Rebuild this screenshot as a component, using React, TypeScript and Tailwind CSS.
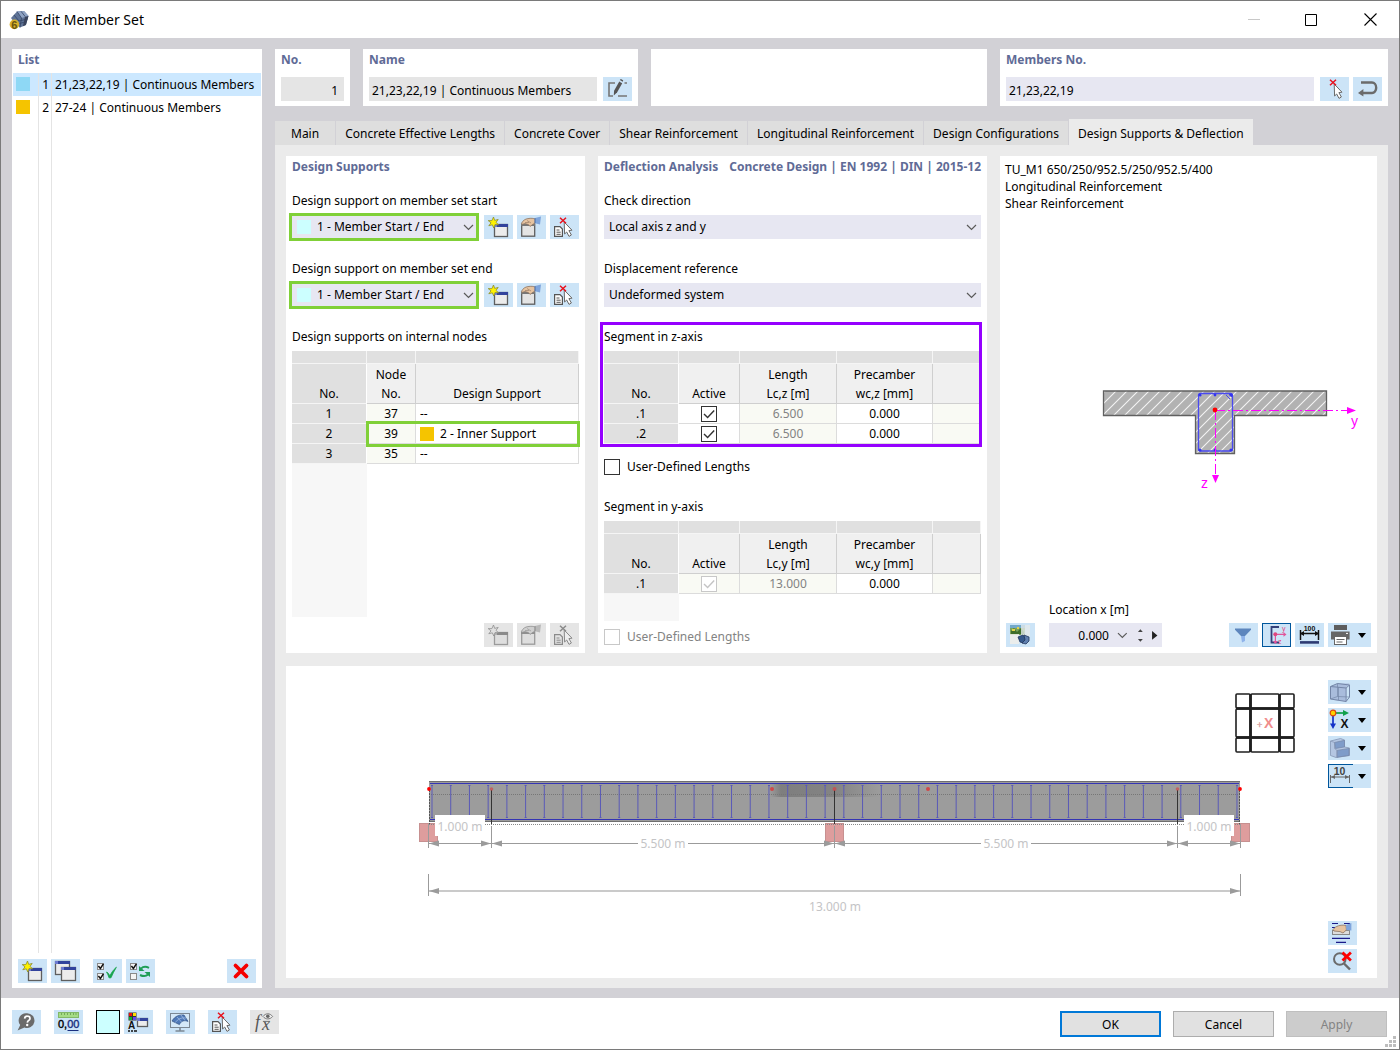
import { useId, useState, type ReactNode } from "react";
import clsx from "clsx";

const GREEN = "border-[3px] border-[#80d038]";

/* ---------- icons, all drawn on a 29x24 button face ---------- */

function Face({ children }: { children: ReactNode }) {
  return (
    <svg width="29" height="24" viewBox="0 0 29 24" fill="none" className="shrink-0" aria-hidden="true">
      {children}
    </svg>
  );
}

function MiniWindow({ x, y, w = 14, h = 13, muted }: { x: number; y: number; w?: number; h?: number; muted?: boolean }) {
  return (
    <g>
      <rect x={x + 0.5} y={y + 0.5} width={w - 1} height={h - 1} fill={muted ? "#dedede" : "#ececec"} stroke={muted ? "#9a9a9a" : "#5e5e5e"} strokeWidth="1.3" />
      <rect x={x} y={y} width={w} height="3" fill={muted ? "#8a8a8a" : "#32439c"} />
      <rect x={x} y={y} width="3" height="3" fill={muted ? "#b0b0b0" : "#6d7ad0"} />
    </g>
  );
}

function NewIcon({ muted }: { muted?: boolean }) {
  return (
    <Face>
      <MiniWindow x={10} y={9} muted={muted} />
      <path
        d="M9.5 2 L10.7 5.4 L14.2 4.4 L12 7.4 L14.6 9.8 L11 9.6 L9.8 13 L8.3 9.8 L4.8 10.8 L7 7.8 L4.2 5.6 L7.9 5.6 Z"
        fill={muted ? "#e0e0e0" : "#fff200"}
        stroke={muted ? "#8f8f8f" : "#8d8d30"}
        strokeWidth="0.8"
      />
    </Face>
  );
}

function EditIcon({ muted }: { muted?: boolean }) {
  return (
    <Face>
      <rect x="4.7" y="9.2" width="13" height="12" fill={muted ? "#dedede" : "#e4e4e4"} stroke={muted ? "#9a9a9a" : "#5e5e5e"} strokeWidth="1.3" />
      <path d="M4 9h14v2H4z" fill={muted ? "#8f8f8f" : "#777"} />
      <path
        d="M4.5 8.2 C6 5.5 8 4 11 3.6 C14 3 16.5 3.3 18.5 4.2 L18 8.4 C16.5 8.8 15.6 9.2 15 10 L13 11.4 L11.4 9.6 L8 8.6 L5 9.4 Z"
        fill={muted ? "#cfcfcf" : "#e6c3a0"}
        stroke={muted ? "#8f8f8f" : "#8c7260"}
        strokeWidth="0.8"
      />
      <path d="M8 7.5h4M10 5.5l4 2.5" stroke={muted ? "#999" : "#9b7d66"} strokeWidth="0.7" />
      <path d="M18 3 L24 1.4 L23 9.4 L18 8.2 Z" fill={muted ? "#b9b9b9" : "#7fa5dc"} />
      <path d="M18 3.2v5" stroke={muted ? "#888" : "#4a6ba0"} />
    </Face>
  );
}

function Cursor({ muted }: { muted?: boolean }) {
  return (
    <path
      d="M14.2 7 L22 15.2 L18.9 15.6 L21.4 20 L19 21.4 L16.7 17 L14.6 19 Z"
      fill={muted ? "#eee" : "#fff"}
      stroke={muted ? "#8a8a8a" : "#6a6a6a"}
      strokeWidth="1"
    />
  );
}

function PickIcon({ doc = true, muted }: { doc?: boolean; muted?: boolean }) {
  return (
    <Face>
      {doc && (
        <g>
          <path d="M4.6 11.6h5.4l2.4 2.4v7.4H4.6z" fill={muted ? "#e4e4e4" : "#fff"} stroke={muted ? "#8a8a8a" : "#555"} strokeWidth="1.2" />
          <path d="M6.5 15h3M6.5 17.2h4.2M6.5 19.3h4.2" stroke={muted ? "#8a8a8a" : "#555"} />
        </g>
      )}
      <Cursor muted={muted} />
      <path d="M10 2.8l6 5.4M16 2.8l-6 5.4" stroke={muted ? "#8a8a8a" : "#e8101c"} strokeWidth="1.5" />
    </Face>
  );
}

function CopyIcon() {
  return (
    <Face>
      <MiniWindow x={4} y={2} w={15} h={14} />
      <MiniWindow x={10} y={8} w={15} h={14} />
    </Face>
  );
}

function TickBox({ x, y, on = true }: { x: number; y: number; on?: boolean }) {
  return (
    <g>
      <rect x={x + 0.5} y={y + 0.5} width="6" height="6" fill="#f4f4f4" stroke="#8a8a8a" />
      {on && <path d={`M${x + 1.4} ${y + 3} l2 2.4 l3 -4.6`} stroke="#111" strokeWidth="1.5" />}
    </g>
  );
}

function CheckAllIcon() {
  return (
    <Face>
      <TickBox x={4} y={4} />
      <TickBox x={4} y={14} />
      <path d="M13.5 13 C15 13.5 16 15 16.8 17 C18 14.5 20 11 23.4 8.2 C21.5 11.5 19.5 15 18 18.8 L16 18.8 C15.4 16.5 14.6 14.8 13.5 13Z" fill="#16a34a" stroke="#16a34a" strokeWidth="0.8" />
    </Face>
  );
}

function SwapIcon() {
  return (
    <Face>
      <TickBox x={4} y={4} />
      <TickBox x={4} y={14} on={false} />
      <path d="M15 9.6 C17 7.6 20 7.4 23 8.8" stroke="#1f9d55" strokeWidth="2" />
      <path d="M13 7v5h5.5z" fill="#1f9d55" />
      <path d="M22 15.6 C20 17.4 17 17.4 14 16" stroke="#1f9d55" strokeWidth="2" />
      <path d="M24 18v-5h-5.5z" fill="#1f9d55" />
    </Face>
  );
}

function RedXIcon() {
  return (
    <Face>
      <path d="M8.5 6.5l11 11M19.5 6.5l-11 11" stroke="#f50000" strokeWidth="3.8" strokeLinecap="round" />
    </Face>
  );
}

function RenameIcon() {
  return (
    <Face>
      <path d="M12 6H6v13h4M15 19h9M21.5 6h2.5" stroke="#757575" strokeWidth="1.6" />
      <path d="M16.2 4.6l3 1.6-5 9-3.4 3.2.3-4.6z" fill="#555" />
      <path d="M16.8 3l1-1 2.4 1.3-.4 1.4z" fill="#555" />
    </Face>
  );
}

function ReverseIcon() {
  return (
    <Face>
      <path d="M8 5.5h11a4 5 0 0 1 0 10.5H9" stroke="#6b6b6b" strokeWidth="2.4" />
      <path d="M5 16l5.4-4v7.6z" fill="#6b6b6b" />
    </Face>
  );
}

function HelpIcon() {
  return (
    <Face>
      <path d="M15 3.2a7.4 7.4 0 1 1-2.6 14.3L5.6 20.6l2.6-5.6A7.4 7.4 0 0 1 15 3.2z" fill="#6b6b6b" />
      <path d="M12.6 8.6c.2-1.8 1.4-2.5 2.8-2.4 1.5 0 2.6.9 2.6 2.2 0 2-2.4 2-2.7 4.2" stroke="#fff" strokeWidth="1.7" />
      <circle cx="15.2" cy="15" r="1.2" fill="#fff" />
    </Face>
  );
}

function DecimalsIcon() {
  return (
    <Face>
      <rect x="4.5" y="2.5" width="20" height="5" fill="#a5dc86" stroke="#82b868" />
      <path d="M7.5 3v2M10.5 3v2M13.5 3v2M16.5 3v2M19.5 3v2M22 3v2" stroke="#5e9447" strokeWidth="0.7" />
      <text x="4" y="18" fontSize="11" fontFamily="Liberation Sans, sans-serif" fill="#000" stroke="#000" strokeWidth="0.4">
        0,<tspan fill="#1a2f80" stroke="#1a2f80">00</tspan>
      </text>
      <path d="M13.5 20.5h11" stroke="#1a2f80" />
    </Face>
  );
}

function StyleIcon() {
  return (
    <Face>
      <rect x="4.5" y="2.5" width="8" height="8" fill="#333" />
      <path d="M5 3h3v3H5z" fill="#e11" />
      <path d="M9 3h3v3H9z" fill="#fd0" />
      <path d="M5 7h3v3H5z" fill="#1a3" />
      <path d="M9 7h3v3H9z" fill="#64e" />
      <text x="4" y="19" fontSize="10" fontWeight="bold" fontFamily="Liberation Sans, sans-serif" fill="#111">A</text>
      <path d="M4 21h2M7 21h2M10 21h3" stroke="#111" strokeWidth="1.4" />
      <MiniWindow x={13} y={8} w={11} h={9} />
    </Face>
  );
}

function ViewIcon() {
  return (
    <Face>
      <rect x="4.5" y="3.5" width="19" height="14" fill="#d4e8f8" stroke="#7c8894" />
      <path d="M6 11 C9 6 13 4.6 18 5 L22 11.4 C18 9.8 15 11 13.4 14.6 Z" fill="#4f79b8" stroke="#31507f" strokeWidth="0.7" />
      <path d="M9.5 12.5C12 8.6 15 7.6 20 8M11 7l4.5 5M15 5l4 5.5" stroke="#a9c4ea" strokeWidth="0.7" />
      <path d="M14 18v3M9.5 21h9" stroke="#7c8894" strokeWidth="1.6" />
    </Face>
  );
}

function FormulaIcon() {
  return (
    <Face>
      <text x="5" y="18" fontSize="18" fontStyle="italic" fontFamily="Liberation Serif, serif" fill="#555">f</text>
      <text x="12" y="20" fontSize="18" fontStyle="italic" fontFamily="Liberation Serif, serif" fill="#555">x</text>
      <path d="M13 6.5c2.6-3.6 7-3.6 9.6 0-2.6 3.2-7 3.2-9.6 0z" stroke="#777" fill="#eee" />
      <circle cx="17.8" cy="6.2" r="1.8" fill="#666" />
      <path d="M13 11.4h7" stroke="#777" />
    </Face>
  );
}

function PictureIcon() {
  return (
    <Face>
      <path d="M4 2h15v10H4z" fill="#7ba25c" />
      <path d="M4 2h15v3H4z" fill="#74a9c9" />
      <path d="M5 8l3-3 3 4 4-4 3 4v2H5z" fill="#3f6e2a" />
      <path d="M6 6h3v2H6zM11 4h2v2h-2z" fill="#e3d44b" />
      <path d="M15 2h9v11h-9z" fill="#e3e8ea" opacity=".8" />
      <path d="M4 11h9v10H4z" fill="#efeeea" opacity=".85" />
      <path d="M12 14l5-2 3 4-3 4-3-1z" fill="#35588c" stroke="#22365c" strokeWidth="0.8" />
      <path d="M18 12l5 2v4l-3 3-4-1 3-3z" fill="#5f7fae" stroke="#22365c" strokeWidth="0.8" />
    </Face>
  );
}

function FilterIcon() {
  return (
    <Face>
      <path d="M6 5.5h16v1.2l-6 6.3h-4L6 6.7z" fill="#5d86bd" />
      <path d="M12 13h4v5l-3 1.5z" fill="#8fb3ea" />
    </Face>
  );
}

function SectionAxesIcon() {
  return (
    <Face>
      <path d="M17 4H9.5v15.5H17" stroke="#33407a" strokeWidth="1.8" />
      <path d="M13 11.4h9M13.4 11v9" stroke="#e0559a" strokeWidth="1.2" />
      <path d="M21.5 9l3 2.4-3 2.4zM11 18l2.4 3 2.4-3z" fill="#e0559a" />
      <circle cx="13.3" cy="11.3" r="2" fill="#e0457f" />
      <text x="20" y="8" fontSize="7" fontFamily="Liberation Sans, sans-serif" fill="#e0457f">y</text>
      <text x="16" y="21" fontSize="7" fontFamily="Liberation Sans, sans-serif" fill="#e0457f">z</text>
    </Face>
  );
}

function DimensionIcon() {
  return (
    <Face>
      <text x="14.5" y="8" textAnchor="middle" fontSize="7" fontWeight="bold" fontFamily="Liberation Sans, sans-serif" fill="#111">100</text>
      <path d="M5.5 7v10M23.5 7v10M5 10.5h19" stroke="#111" strokeWidth="1.5" />
      <path d="M5 10.5l4-2.5v5zM24 10.5l-4-2.5v5z" fill="#111" />
      <path d="M5 19.4h19" stroke="#2d3a72" strokeWidth="2.6" />
    </Face>
  );
}

function PrinterIcon() {
  return (
    <Face>
      <path d="M6 2h13v5H6z" fill="#5d5d5d" />
      <path d="M3 8.5h18.6v8H3z" fill="#666" />
      <rect x="6.5" y="13.5" width="12" height="8" fill="#fff" stroke="#666" />
      <path d="M8.5 16.5h8M8.5 19h6" stroke="#666" />
      <path d="M18 10.4h2" stroke="#fff" />
    </Face>
  );
}

function CubeIcon() {
  return (
    <Face>
      <path d="M2.5 6.5l7-3h12l-3.4 4v14l-12-1.5-3.6-1z" fill="#a9bcdc" />
      <path d="M2.5 6.5l7-3 12 1.5-3.4 3zM2.5 6.5v12.5l15.6 2.5V8M18.1 21.5l3.4-4.5V5" stroke="#7486a8" />
      <path d="M9.5 3.5v13l-7 2.5M9.5 16.5l12 .5M10.5 7v13" stroke="#7486a8" strokeWidth="0.7" />
    </Face>
  );
}

function AxisIcon() {
  return (
    <Face>
      <path d="M5 5v11" stroke="#1432c8" strokeWidth="1.7" />
      <path d="M2 15.5h6l-3 5.5z" fill="#1432c8" />
      <path d="M6 5h10" stroke="#12a04a" strokeWidth="1.7" />
      <path d="M15 2l6 3-6 3z" fill="#12a04a" />
      <circle cx="5" cy="5" r="2.8" fill="#ffd400" stroke="#e04a10" strokeWidth="1.2" />
      <text x="12.5" y="20" fontSize="12" fontWeight="bold" fontFamily="Liberation Sans, sans-serif" fill="#111">X</text>
    </Face>
  );
}

function StepsIcon() {
  return (
    <Face>
      <path d="M2.5 5l10-2.5 4 1.5v7l5 1v7.5L8 21.5l-5.5-2z" fill="#b4c6e2" stroke="#8797b5" strokeWidth="0.8" />
      <path d="M6.5 6.5l10-2.2v6.6l-9 1.6zM9 14.4l12-2v7l-12 1.8z" fill="#7f9cc9" stroke="#7587a8" strokeWidth="0.7" />
      <path d="M2.5 5l4 1.5v6L9 14.4v7" stroke="#8797b5" strokeWidth="0.7" />
    </Face>
  );
}

function TenIcon() {
  return (
    <Face>
      <text x="10.5" y="9.5" textAnchor="middle" fontSize="10.5" fontWeight="bold" fontFamily="Liberation Sans, sans-serif" fill="#444">10</text>
      <path d="M1.5 10v8M20.5 10v8M2 12h18" stroke="#666" />
      <path d="M2 12l4-2v4zM20 12l-4-2v4z" fill="#666" />
    </Face>
  );
}

function LayersHandIcon() {
  return (
    <Face>
      <path d="M4 2.5h6M16 2.5h6M4 6.5h3" stroke="#1b1b8a" strokeWidth="1.2" />
      <rect x="4.5" y="9.5" width="17" height="4" fill="#ddd" stroke="#888" />
      <path d="M5 8.4C8 5 12 3.6 18 4.4l.4 4.6-3.4 3-3-1.4-6-.6z" fill="#e6c3a0" stroke="#8c7260" strokeWidth="0.8" />
      <path d="M18 4l5.4-2v7.6L18.4 9z" fill="#7fa5dc" />
      <path d="M4 17.4h18M8 21.4h10" stroke="#1b1b8a" strokeWidth="1.3" />
    </Face>
  );
}

function ZoomResetIcon() {
  return (
    <Face>
      <circle cx="11.8" cy="10" r="5.8" stroke="#6b6b6b" strokeWidth="2" />
      <path d="M16 14.5l6 6" stroke="#6b6b6b" strokeWidth="2.4" />
      <path d="M14.5 3.5l8.4 8M22.9 3.5l-8.4 8" stroke="#f00" strokeWidth="2.8" />
    </Face>
  );
}

function AppIcon() {
  return (
    <svg width="20" height="20" viewBox="0 0 20 20" aria-hidden="true">
      <path d="M2 8L8 1.5l7-.5 4.5 5-2.6 9-6 2.4L5 12z" fill="#5f7396" />
      <path d="M8 1.5l7-.5 4.5 5-7 2z" fill="#8fa3c4" />
      <path d="M8 1.5L12.5 8 11 17.4M12 1.3l4.4 5.5M5 5l5 6 8.6-2M10.5 13.5l7-2" stroke="#334566" strokeWidth="0.8" fill="none" />
      <path d="M19.5 6l-2.6 9-3 1.2L16 7z" fill="#39435c" />
      <circle cx="5.4" cy="14.4" r="4.8" fill="#d8b02a" />
      <text x="5.4" y="18.6" textAnchor="middle" fontSize="11" fontWeight="bold" fontFamily="Liberation Sans, sans-serif" fill="#6a5410">6</text>
    </svg>
  );
}

function Chevron({ className }: { className?: string }) {
  return (
    <svg width="11" height="7" viewBox="0 0 11 7" fill="none" className={className} aria-hidden="true">
      <path d="M1 1l4.5 4.5L10 1" stroke="#5a5a5a" strokeWidth="1.2" />
    </svg>
  );
}

/* ---------- controls ---------- */

type IconButtonProps = {
  label: string;
  children: ReactNode;
  disabled?: boolean;
  menu?: boolean;
  active?: boolean;
};

function IconButton({ label, children, disabled, menu, active }: IconButtonProps) {
  return (
    <button
      type="button"
      aria-label={label}
      title={label}
      disabled={disabled}
      className={clsx(
        "flex h-6 shrink-0 items-center overflow-hidden",
        menu ? "w-[43px]" : "w-[29px]",
        disabled ? "bg-[#e5e5e5]" : "bg-[#cce4f7] hover:bg-[#b9daf3]",
        active && "outline outline-1 -outline-offset-1 outline-[#00569c]",
      )}
    >
      {children}
      {menu && (
        <svg width="9" height="5" viewBox="0 0 9 5" className="shrink-0" aria-hidden="true">
          <path d="M1 0h8L5 5z" fill="#000" />
        </svg>
      )}
    </button>
  );
}

function Heading({ children }: { children: ReactNode }) {
  return <h2 className="flex h-[22px] items-center justify-between font-bold whitespace-nowrap text-[#5f6b96]">{children}</h2>;
}

function SelectField({ label, value }: { label: string; value: string }) {
  const id = useId();
  return (
    <div className="mb-[18px]">
      <label htmlFor={id} className="mb-0.5 block leading-6">{label}</label>
      <div className="grid">
        <select id={id} className="col-start-1 row-start-1 h-6 w-full appearance-none bg-[#e7e7f2] px-[5px]">
          <option>{value}</option>
        </select>
        <Chevron className="pointer-events-none col-start-1 row-start-1 mr-1 self-center justify-self-end" />
      </div>
    </div>
  );
}

function SupportField({ label }: { label: string }) {
  const id = useId();
  return (
    <div className="mb-[18px]">
      <label htmlFor={id} className="mb-0.5 block leading-6">{label}</label>
      <div className="flex gap-1">
        <div className="relative mr-1 grid flex-1">
          <select id={id} className="col-start-1 row-start-1 h-6 w-full appearance-none bg-[#e7e7f2] pl-[25px]">
            <option>1 - Member Start / End</option>
          </select>
          <span className="pointer-events-none col-start-1 row-start-1 ml-[5px] size-3.5 self-center bg-[#ccffff]" />
          <Chevron className="pointer-events-none col-start-1 row-start-1 mr-0.5 self-center justify-self-end" />
          <span className={clsx("pointer-events-none absolute -inset-x-[3px] -inset-y-0.5", GREEN)} />
        </div>
        <IconButton label="New support"><NewIcon /></IconButton>
        <IconButton label="Edit support"><EditIcon /></IconButton>
        <IconButton label="Pick support"><PickIcon /></IconButton>
      </div>
    </div>
  );
}

function TickInput({ id, label, disabled, checked }: { id?: string; label?: string; disabled?: boolean; checked?: boolean }) {
  return (
    <span className="inline-grid align-top">
      <input
        id={id}
        type="checkbox"
        aria-label={label}
        defaultChecked={checked}
        disabled={disabled}
        className="peer col-start-1 row-start-1 size-4 appearance-none border border-[#333] bg-white disabled:border-[#c8c8c8]"
      />
      <svg viewBox="0 0 16 16" fill="none" className="pointer-events-none invisible col-start-1 row-start-1 size-4 text-[#333] peer-checked:visible peer-disabled:text-[#c4c4c4]" aria-hidden="true">
        <path d="M3 8l3.6 3.5L13.2 4.6" stroke="currentColor" strokeWidth="1.4" />
      </svg>
    </span>
  );
}

function CheckBox({ label, disabled }: { label: string; disabled?: boolean }) {
  const id = useId();
  return (
    <div className="flex h-6 items-center gap-[7px]">
      <TickInput id={id} disabled={disabled} />
      <label htmlFor={id} className={clsx(disabled && "text-[#838383]")}>{label}</label>
    </div>
  );
}

/* ---------- tables ---------- */

const headCell = "h-10 border-r border-b border-[#cfcfcf] bg-[#f0f0f0] p-0 align-bottom font-normal";
const numberCell = "h-5 border-r border-b border-r-white border-b-[#f5f5f5] bg-[#e0e0e0] p-0 text-center align-bottom font-normal";
const cell = "h-5 border-r border-b border-[#dcdcdc] p-0 text-center";
const stripCell = "h-[13px] border-r border-b border-[#f5f5f5] bg-[#e0e0e0] p-0";
const tableClass = "w-full table-fixed border-separate border-spacing-0 leading-[19px]";

const nodes = [
  { no: 1, node: 37, support: "--" },
  { no: 2, node: 39, support: "2 - Inner Support" },
  { no: 3, node: 35, support: "--" },
];

function NodeTable() {
  return (
    <div className="relative">
      <table className={tableClass}>
        <colgroup>
          <col className="w-[75px]" />
          <col className="w-[49px]" />
          <col />
        </colgroup>
        <thead>
          <tr>
            <td className={stripCell} />
            <td className={stripCell} />
            <td className={stripCell} />
          </tr>
          <tr>
            <th className={numberCell}>No.</th>
            <th className={headCell}>Node<br />No.</th>
            <th className={headCell}>Design Support</th>
          </tr>
        </thead>
        <tbody>
          {nodes.map((n) => (
            <tr key={n.no}>
              <th className={numberCell}>{n.no}</th>
              <td className={clsx(cell, "bg-[#f9faf4]")}>{n.node}</td>
              <td className={clsx(cell, "bg-white")}>
                <span className="flex items-center gap-1.5 px-1">
                  {n.no === 2 && <span className="size-3.5 bg-[#f5c400]" />}
                  {n.support}
                </span>
              </td>
            </tr>
          ))}
        </tbody>
      </table>
      <span className={clsx("pointer-events-none absolute -right-px bottom-[17px] left-[74px] h-[26px]", GREEN)} />
    </div>
  );
}

type Segment = { no: string; length: string; precamber: string };

function SegmentTable({ axis, rows, locked }: { axis: string; rows: Segment[]; locked?: boolean }) {
  return (
    <table className={tableClass}>
      <colgroup>
        <col className="w-[75px]" />
        <col className="w-[61px]" />
        <col className="w-[97px]" />
        <col className="w-24" />
        <col />
      </colgroup>
      <thead>
        <tr>
          <td className={stripCell} />
          <td className={stripCell} />
          <td className={stripCell} />
          <td className={stripCell} />
          <td className={stripCell} />
        </tr>
        <tr>
          <th className={numberCell}>No.</th>
          <th className={headCell}>Active</th>
          <th className={headCell}>Length<br />Lc,{axis} [m]</th>
          <th className={headCell}>Precamber<br />wc,{axis} [mm]</th>
          <td className={headCell} />
        </tr>
      </thead>
      <tbody>
        {rows.map((r) => (
          <tr key={r.no}>
            <th className={numberCell}>{r.no}</th>
            <td className={clsx(cell, "leading-none", locked ? "bg-[#f9faf4]" : "bg-white")}>
              <TickInput label={`Segment ${r.no} in ${axis}-axis active`} checked disabled={locked} />
            </td>
            <td className={clsx(cell, "bg-[#f9faf4] text-[#838383]")}>{r.length}</td>
            <td className={clsx(cell, "bg-white")}>{r.precamber}</td>
            <td className={clsx(cell, "bg-[#f9faf4]")} />
          </tr>
        ))}
      </tbody>
    </table>
  );
}

/* ---------- drawings ---------- */

function CrossSection() {
  return (
    <svg viewBox="1000 212 377 386" className="h-[386px] w-full" aria-label="Cross-section">
      <defs>
        <pattern id="hatch" width="11" height="11" patternUnits="userSpaceOnUse">
          <rect width="11" height="11" fill="#b2b2b2" />
          <path d="M-1 12L12 -1M-1 1L1 -1M10 12L12 10" stroke="#f4f4f4" strokeWidth="1.1" />
        </pattern>
      </defs>
      <path d="M1103.5 391h223v24.5h-92v38h-39v-38h-92z" fill="url(#hatch)" stroke="#606060" strokeWidth="1.3" />
      <rect x="1198.5" y="393.5" width="34" height="57.5" rx="2" fill="none" stroke="#4a4af0" strokeWidth="1.3" />
      <path d="M1226 395l4 4M1229 394l4 4" stroke="#4a4af0" />
      <g fill="#3434ee">
        <circle cx="1200" cy="395" r="1.6" />
        <circle cx="1215" cy="395" r="1.4" />
        <circle cx="1231" cy="395" r="1.6" />
        <circle cx="1200" cy="450" r="1.6" />
        <circle cx="1215" cy="450" r="1.4" />
        <circle cx="1231" cy="450" r="1.6" />
      </g>
      <path d="M1215 410.5H1350M1215.5 410V476" stroke="#f0f" strokeDasharray="10 3 2 3" fill="none" />
      <path d="M1347 407l9 3.5-9 3.5zM1212 475h7l-3.5 8z" fill="#f0f" />
      <circle cx="1215" cy="410" r="2.4" fill="#f00" />
      <text x="1351" y="426" fontSize="14" fontFamily="Liberation Sans, sans-serif" fill="#f0f">y</text>
      <text x="1201" y="488" fontSize="14" fontFamily="Liberation Sans, sans-serif" fill="#f0f">z</text>
    </svg>
  );
}

const stirrups = Array.from({ length: 44 }, (_, i) => 432 + i * 18.72);
const cubeCols = [[1236, 14], [1251, 28], [1280, 14]];
const cubeRows = [[694, 14], [709, 28], [738, 14]];

function Arrow({ x, y, dir }: { x: number; y: number; dir: 1 | -1 }) {
  return <path d={`M${x} ${y}l${-10 * dir} -3v6z`} fill="#9b9b9b" />;
}

function BeamView() {
  return (
    <svg viewBox="286 666 1036 312" className="h-[312px] min-w-0 flex-1" fontFamily="Noto Sans, sans-serif" fontSize="12" aria-label="Member view">
      <defs>
        <linearGradient id="shade" x1="0" x2="1" y1="0" y2="0">
          <stop offset="0" stopColor="#666" stopOpacity="0" />
          <stop offset="0.1" stopColor="#666" stopOpacity=".55" />
          <stop offset="0.6" stopColor="#666" stopOpacity=".45" />
          <stop offset="1" stopColor="#666" stopOpacity="0" />
        </linearGradient>
      </defs>

      {/* Supports */}
      <g fill="#de9d9d" stroke="#c79090">
        <rect x="419.5" y="823.5" width="18" height="18" />
        <rect x="825.5" y="823.5" width="18" height="18" />
        <rect x="1231.5" y="823.5" width="18" height="18" />
      </g>

      {/* Beam */}
      <rect x="429" y="781" width="811" height="41" fill="#9c9c9c" />
      <rect x="770" y="783" width="110" height="14" fill="url(#shade)" />
      <path d="M429 781.5H1240M429 821.5H1240" stroke="#6f6f6f" />
      <path d="M430 783.5H1239M430 819.5H1239" stroke="#3434b4" />
      <path d="M429 794.5H1240" stroke="#777" strokeDasharray="1 1" />
      {stirrups.map((x) => (
        <path key={x} d={`M${x} 785V818M${x - 1} 785.5h2M${x - 1} 817.5h2`} stroke="#5a5ab8" />
      ))}
      <path d="M429 824.5H1240" stroke="#888" strokeDasharray="1 1" />
      <path d="M491.5 790V824M834.5 790V824M1177.5 790V824" stroke="#333" />
      <path d="M429.5 790V824M1239.5 790V824" stroke="#555" strokeDasharray="2 1" />
      <g fill="#d04848">
        <circle cx="491.5" cy="789" r="1.8" opacity=".7" />
        <circle cx="772" cy="789" r="2" />
        <circle cx="834.5" cy="789" r="2" opacity=".8" />
        <circle cx="928" cy="789" r="2" />
        <circle cx="1177.5" cy="789" r="1.8" opacity=".7" />
      </g>
      <circle cx="429" cy="789" r="1.9" fill="#f00" />
      <circle cx="1240" cy="789" r="1.9" fill="#f00" />

      {/* Dimensions */}
      <path d="M429 843.5H638M688 843.5H981M1031 843.5H1240" stroke="#9b9b9b" />
      <path d="M428.5 824V848M491.5 826V848M834.5 826V848M1177.5 826V848M1240.5 824V848" stroke="#9b9b9b" />
      <Arrow x={429} y={843.5} dir={-1} />
      <Arrow x={491} y={843.5} dir={1} />
      <Arrow x={492} y={843.5} dir={-1} />
      <Arrow x={834} y={843.5} dir={1} />
      <Arrow x={835} y={843.5} dir={-1} />
      <Arrow x={1177} y={843.5} dir={1} />
      <Arrow x={1178} y={843.5} dir={-1} />
      <Arrow x={1240} y={843.5} dir={1} />
      <path d="M429 891H1240" stroke="#cacaca" strokeWidth="2" />
      <path d="M428.5 874V896M1240.5 874V896" stroke="#9b9b9b" />
      <Arrow x={429} y={891} dir={-1} />
      <Arrow x={1240} y={891} dir={1} />
      <path d="M435 815h50v21h-50zM1184 815h50v21h-50z" fill="#fff" />
      <g fill="#c4c4c6" textAnchor="middle">
        <text x="460" y="831">1.000 m</text>
        <text x="1209" y="831">1.000 m</text>
        <text x="663" y="848">5.500 m</text>
        <text x="1006" y="848">5.500 m</text>
        <text x="835" y="911">13.000 m</text>
      </g>

      {/* Navigation cube */}
      {cubeRows.map(([y, h]) =>
        cubeCols.map(([x, w]) => (
          <rect key={`${x}-${y}`} x={x} y={y} width={w} height={h} rx="1" fill="#fff" stroke="#1f1f1f" strokeWidth="1.6" />
        )),
      )}
      <path d="M1250.5 694v58M1279.5 694v58M1236 708.5h58M1236 737.5h58" stroke="#1f1f1f" strokeWidth="2.4" />
      <text x="1257" y="728" fontSize="9" fontFamily="Liberation Sans, sans-serif" fill="#d8a0a0" stroke="#d8a0a0" strokeWidth="0.4">+</text>
      <text x="1264" y="728" fontSize="14" fontWeight="bold" fontFamily="Liberation Sans, sans-serif" fill="#f08c8c">X</text>
    </svg>
  );
}

/* ---------- window parts ---------- */

const memberSets = [
  { no: 1, label: "21,23,22,19 | Continuous Members", swatch: "bg-[#8ed8f5]" },
  { no: 2, label: "27-24 | Continuous Members", swatch: "bg-[#f5c400]" },
];

function MemberList() {
  const [selected, setSelected] = useState(1);
  return (
    <aside className="flex w-[250px] shrink-0 flex-col bg-white px-px pb-[5px]">
      <h2 className="h-6 px-[5px] leading-[22px] font-bold text-[#5f6b96]">List</h2>
      {memberSets.map((m) => (
        <button
          key={m.no}
          type="button"
          onClick={() => setSelected(m.no)}
          className={clsx("flex h-[23px] items-stretch text-left leading-6 whitespace-nowrap", selected === m.no && "bg-[#cce8ff]")}
        >
          <span className="w-[26px] shrink-0 border-r border-[#e4e4e4] px-[3px] py-1">
            <span className={clsx("block size-3.5", m.swatch)} />
          </span>
          <span className="w-[13px] shrink-0 border-r border-[#e4e4e4] pr-0.5 text-right">{m.no}</span>
          <span className="pl-[3px]">{m.label}</span>
        </button>
      ))}
      <div className="flex flex-1">
        <span className="w-[26px] border-r border-[#e4e4e4]" />
        <span className="w-[13px] border-r border-[#e4e4e4]" />
      </div>
      <div className="mt-1.5 flex gap-1 px-[5px]">
        <IconButton label="New set"><NewIcon /></IconButton>
        <IconButton label="Copy set"><CopyIcon /></IconButton>
        <div className="ml-[9px] flex flex-1 gap-1">
          <IconButton label="Select all"><CheckAllIcon /></IconButton>
          <IconButton label="Invert selection"><SwapIcon /></IconButton>
        </div>
        <IconButton label="Delete"><RedXIcon /></IconButton>
      </div>
    </aside>
  );
}

const cardLabel = "mb-1.5 block leading-[22px] font-bold text-[#5f6b96]";

function TopCards() {
  return (
    <div className="flex gap-[13px]">
      <div className="w-[75px] bg-white px-1.5 pb-[5px]">
        <label htmlFor="set-no" className={cardLabel}>No.</label>
        <input id="set-no" readOnly value="1" className="block h-6 w-full bg-[#e5e5e5] px-1.5 pt-0.5 text-right" />
      </div>
      <div className="w-[275px] bg-white px-1.5 pb-[5px]">
        <label htmlFor="set-name" className={cardLabel}>Name</label>
        <div className="flex gap-1.5">
          <input id="set-name" readOnly value="21,23,22,19 | Continuous Members" className="block h-6 min-w-0 flex-1 bg-[#e5e5e5] px-[3px] pt-0.5" />
          <IconButton label="Rename"><RenameIcon /></IconButton>
        </div>
      </div>
      <div className="flex-1 bg-white" />
      <div className="w-[388px] bg-white px-1.5 pb-[5px]">
        <label htmlFor="members" className={cardLabel}>Members No.</label>
        <div className="flex gap-1">
          <input id="members" defaultValue="21,23,22,19" className="mr-0.5 block h-6 min-w-0 flex-1 bg-[#e7e7f2] px-[3px] pt-0.5" />
          <IconButton label="Pick members"><PickIcon doc={false} /></IconButton>
          <IconButton label="Reverse order"><ReverseIcon /></IconButton>
        </div>
      </div>
    </div>
  );
}

const tabs = [
  "Main",
  "Concrete Effective Lengths",
  "Concrete Cover",
  "Shear Reinforcement",
  "Longitudinal Reinforcement",
  "Design Configurations",
  "Design Supports & Deflection",
];

function Tabs() {
  const [active, setActive] = useState(6);
  return (
    <div role="tablist" className="mt-[13px] flex items-end">
      {tabs.map((t, i) => (
        <button
          key={t}
          type="button"
          role="tab"
          aria-selected={i === active}
          onClick={() => setActive(i)}
          className={clsx(
            "whitespace-nowrap",
            i === 0 ? "px-4" : "px-[9px]",
            i === active ? "h-[26px] bg-[#ebebeb] pt-1" : "h-6 border-r border-[#d2d1d6] bg-[#dedede] pt-0.5",
          )}
        >
          {t}
        </button>
      ))}
    </div>
  );
}

function DesignSupports() {
  return (
    <section className="flex w-[299px] shrink-0 flex-col bg-white px-1.5 pb-1.5">
      <Heading>Design Supports</Heading>
      <div className="mt-[11px]">
        <SupportField label="Design support on member set start" />
        <SupportField label="Design support on member set end" />
      </div>
      <p className="mb-0.5 leading-6">Design supports on internal nodes</p>
      <NodeTable />
      <div className="mb-1.5 w-[75px] flex-1 bg-[#f7f7f7]" />
      <div className="flex justify-end gap-1">
        <IconButton label="New support" disabled><NewIcon muted /></IconButton>
        <IconButton label="Edit support" disabled><EditIcon muted /></IconButton>
        <IconButton label="Pick support" disabled><PickIcon muted /></IconButton>
      </div>
    </section>
  );
}

function DeflectionAnalysis() {
  return (
    <section className="w-[389px] shrink-0 bg-white px-1.5 pb-1">
      <Heading>
        <span>Deflection Analysis</span>
        <span>Concrete Design | EN 1992 | DIN | 2015-12</span>
      </Heading>
      <div className="mt-[11px]">
        <SelectField label="Check direction" value="Local axis z and y" />
        <SelectField label="Displacement reference" value="Undeformed system" />
      </div>
      <div className="relative">
        <p className="mb-0.5 leading-6">Segment in z-axis</p>
        <SegmentTable
          axis="z"
          rows={[
            { no: ".1", length: "6.500", precamber: "0.000" },
            { no: ".2", length: "6.500", precamber: "0.000" },
          ]}
        />
        <span className="pointer-events-none absolute -top-[3px] -right-px -bottom-[3px] -left-1 border-[3px] border-[#9500ff]" />
      </div>
      <div className="mt-[11px] mb-4">
        <CheckBox label="User-Defined Lengths" />
      </div>
      <p className="mb-0.5 leading-6">Segment in y-axis</p>
      <SegmentTable axis="y" locked rows={[{ no: ".1", length: "13.000", precamber: "0.000" }]} />
      <div className="mb-1 h-[27px] w-[75px] bg-[#f7f7f7]" />
      <CheckBox label="User-Defined Lengths" disabled />
    </section>
  );
}

function SectionPanel() {
  return (
    <section className="flex min-w-0 flex-1 flex-col bg-white px-1.5 pt-[5px] pb-1.5">
      <div className="-ml-px leading-[17px]">
        <p>TU_M1 650/250/952.5/250/952.5/400</p>
        <p>Longitudinal Reinforcement</p>
        <p>Shear Reinforcement</p>
      </div>
      <div className="-mx-1.5">
        <CrossSection />
      </div>
      <div className="mt-auto flex items-end gap-1">
        <IconButton label="Section picture"><PictureIcon /></IconButton>
        <div className="ml-2.5 w-[113px]">
          <label htmlFor="location" className="mb-px block leading-6 whitespace-nowrap">Location x [m]</label>
          <div className="flex h-6 items-center bg-[#e7e7f2]">
            <input id="location" defaultValue="0.000" className="w-[60px] bg-transparent pt-0.5 text-right" />
            <Chevron className="ml-2" />
            <svg width="27" height="16" viewBox="0 0 27 16" className="ml-2" aria-hidden="true">
              <path d="M2 5l2.5-3L7 5zM2 12l2.5 3L7 12z" fill="#444" />
              <path d="M16.5 4l5.500 4.500-5.500 4.500z" fill="#222" />
            </svg>
          </div>
        </div>
        <div className="ml-auto flex gap-1">
          <IconButton label="Filter"><FilterIcon /></IconButton>
          <IconButton label="Show axes" active><SectionAxesIcon /></IconButton>
          <IconButton label="Show dimensions"><DimensionIcon /></IconButton>
          <IconButton label="Print" menu><PrinterIcon /></IconButton>
        </div>
      </div>
    </section>
  );
}

function MemberView() {
  return (
    <section className="mt-[13px] flex flex-1 bg-white pr-1.5">
      <BeamView />
      <div className="ml-1.5 flex w-[43px] flex-col gap-1 pt-3.5 pb-[5px]">
        <IconButton label="View mode" menu><CubeIcon /></IconButton>
        <IconButton label="View direction" menu><AxisIcon /></IconButton>
        <IconButton label="Display style" menu><StepsIcon /></IconButton>
        <IconButton label="Dimensions" menu>
          <span className="mr-1 flex h-6 w-[25px] shrink-0 border border-r-0 border-[#00569c]"><TenIcon /></span>
        </IconButton>
        <div className="mt-auto flex flex-col gap-1">
          <IconButton label="Edit layers"><LayersHandIcon /></IconButton>
          <IconButton label="Reset zoom"><ZoomResetIcon /></IconButton>
        </div>
      </div>
    </section>
  );
}

function Footer() {
  return (
    <footer className="relative flex h-[51px] items-start gap-[13px] px-[11px] pt-3">
      <IconButton label="Help"><HelpIcon /></IconButton>
      <IconButton label="Decimal places"><DecimalsIcon /></IconButton>
      <div className="flex gap-1">
        <button type="button" aria-label="Colour" className="size-6 border border-black bg-[#ccffff]" />
        <IconButton label="Display properties"><StyleIcon /></IconButton>
      </div>
      <IconButton label="Show in model"><ViewIcon /></IconButton>
      <IconButton label="Pick object"><PickIcon /></IconButton>
      <IconButton label="Formula" disabled><FormulaIcon /></IconButton>
      <div className="mr-px ml-auto flex gap-3 pt-px">
        <button type="button" className="h-[26px] w-[101px] border-2 border-[#0078d7] bg-[#e1e1e1] pt-0.5">OK</button>
        <button type="button" className="h-[26px] w-[101px] border border-[#adadad] bg-[#e1e1e1] pt-0.5">Cancel</button>
        <button type="button" disabled className="h-[26px] w-[101px] border border-[#bfbfbf] bg-[#cccccc] pt-0.5 text-[#838383]">Apply</button>
      </div>
      <svg width="11" height="11" viewBox="0 0 11 11" fill="#bdbdbd" className="absolute right-[3px] bottom-0.5" aria-hidden="true">
        <path d="M8 0h3v3H8zM4 4h3v3H4zM8 4h3v3H8zM0 8h3v3H0zM4 8h3v3H4zM8 8h3v3H8z" />
      </svg>
    </footer>
  );
}

export default function App() {
  return (
    <div className="flex min-h-screen flex-col border border-[#7a7a7a] bg-white font-['Noto_Sans',sans-serif] text-[12px] leading-5 text-black">
      <header className="flex h-[37px] items-center gap-[5px] pl-2">
        <AppIcon />
        <h1 className="flex-1 pl-px text-[14px]">Edit Member Set</h1>
        <button type="button" aria-label="Minimize" className="flex w-[53px] justify-center">
          <svg width="12" height="12" viewBox="0 0 12 12"><path d="M0 5.5h12" stroke="#c8c8c8" /></svg>
        </button>
        <button type="button" aria-label="Maximize" className="flex w-[51px] justify-center">
          <svg width="12" height="12" viewBox="0 0 12 12"><path d="M.5.5h11v11H.5z" fill="none" stroke="#000" /></svg>
        </button>
        <button type="button" aria-label="Close" className="flex w-[58px] justify-center">
          <svg width="13" height="13" viewBox="0 0 13 13"><path d="M.5.5l12 12M12.500.5l-12 12" fill="none" stroke="#000" strokeWidth="1.1" /></svg>
        </button>
      </header>

      <div className="flex flex-1 gap-[13px] bg-[#d2d1d6] px-[11px] pt-[11px] pb-2.5">
        <MemberList />
        <main className="flex min-w-0 flex-1 flex-col">
          <TopCards />
          <Tabs />
          <div className="flex flex-1 flex-col bg-[#ebebeb] px-[11px] pt-[11px] pb-2.5">
            <div className="flex gap-[13px]">
              <DesignSupports />
              <DeflectionAnalysis />
              <SectionPanel />
            </div>
            <MemberView />
          </div>
        </main>
      </div>

      <Footer />
    </div>
  );
}
